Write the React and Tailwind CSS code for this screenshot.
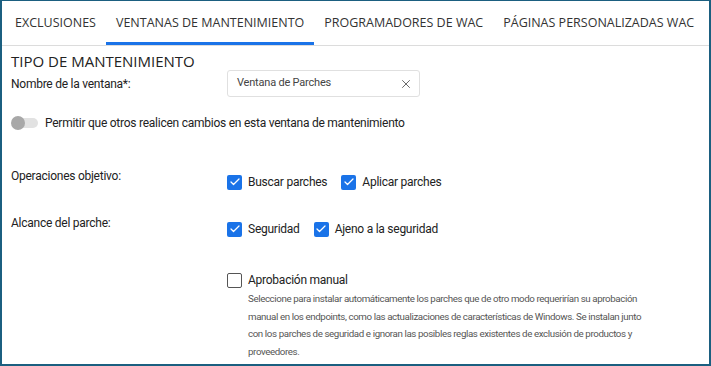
import { X, Check } from 'lucide-react';

const TABS = ['Exclusiones', 'Ventanas de mantenimiento', 'Programadores de WAC', 'Páginas personalizadas WAC'];

function Checkbox({ checked, label }) {
  return (
    <label className="flex items-center gap-[6px] h-[16px]">
      {checked ? (
        <span className="w-[15px] h-[15px] rounded-[2px] bg-[#1a73e8] flex items-center justify-center">
          <Check size={12} strokeWidth={2.5} className="text-white" />
        </span>
      ) : (
        <span className="w-[15px] h-[15px] rounded-[2px] border-[1.5px] border-[#555] bg-white" />
      )}
      <span className="text-[12px] leading-[16px] tracking-[-0.25px] text-[#222]">{label}</span>
    </label>
  );
}

export default function App() {
  const body = { fontFamily: 'Roboto, "Noto Sans", sans-serif' };
  return (
    <div className="w-[711px] h-[366px] bg-white border-x-2 border-t border-b-2 border-[#1b5f80] overflow-hidden" style={body}>
      {/* Tabs */}
      <div className="flex h-[45px] border-b border-[#dcdcdc] pl-[3px]" style={{ fontFamily: '"Open Sans", sans-serif' }}>
        {TABS.map((t, i) => (
          <div
            key={t}
            className={`px-[10px] flex items-center whitespace-nowrap uppercase text-[12.5px] text-[#333] ${i === 1 ? 'border-b-[3px] border-[#1a73e8] pt-[3px]' : ''}`}
          >
            {t}
          </div>
        ))}
      </div>

      <div className="pl-[9px]">
        <h2 className="text-[15px] text-[#222] uppercase mt-[6px] leading-[18px]" style={{ fontFamily: '"Open Sans", sans-serif' }}>
          Tipo de mantenimiento
        </h2>

        <div className="flex items-center">
          <div className="w-[216px] text-[12px] tracking-[-0.25px] text-[#222]">Nombre de la ventana*:</div>
          <div className="w-[193px] h-[27px] border border-[#e0e0e0] rounded-[3px] flex items-center justify-between pl-[9px] pr-[6px]">
            <span className="text-[11px] text-[#444] tracking-[-0.2px]">Ventana de Parches</span>
            <X size={14} strokeWidth={1.5} className="text-[#555]" />
          </div>
        </div>

        <div className="flex items-center mt-[18px] gap-[7px] h-[16px]">
          <div className="relative w-[27px] h-[14px]">
            <div className="absolute left-[3px] right-0 top-[2px] h-[10px] rounded-full bg-[#e2e2e2]" />
            <div className="absolute left-0 top-0 w-[14px] h-[14px] rounded-full bg-[#a8a8a8]" />
          </div>
          <span className="text-[12px] leading-[16px] tracking-[-0.25px] text-[#222]">Permitir que otros realicen cambios en esta ventana de mantenimiento</span>
        </div>

        <div className="flex mt-[37px]">
          <div className="w-[216px] text-[12px] leading-[16px] tracking-[-0.25px] text-[#222]">Operaciones objetivo:</div>
          <div className="flex gap-[14px] mt-[6px]">
            <Checkbox checked label="Buscar parches" />
            <Checkbox checked label="Aplicar parches" />
          </div>
        </div>

        <div className="flex mt-[25px]">
          <div className="w-[216px] text-[12px] leading-[16px] tracking-[-0.25px] text-[#222]">Alcance del parche:</div>
          <div className="flex gap-[14px] mt-[6px]">
            <Checkbox checked label="Seguridad" />
            <Checkbox checked label="Ajeno a la seguridad" />
          </div>
        </div>

        <div className="ml-[216px] mt-[35px]">
          <Checkbox label="Aprobación manual" />
          <p className="ml-[21px] mt-[2px] whitespace-nowrap text-[9.75px] tracking-[-0.4px] leading-[17.5px] text-[#555]">
            Seleccione para instalar automáticamente los parches que de otro modo requerirían su aprobación
            <br />
            manual en los endpoints, como las actualizaciones de características de Windows. Se instalan junto
            <br />
            con los parches de seguridad e ignoran las posibles reglas existentes de exclusión de productos y
            <br />
            proveedores.
          </p>
        </div>
      </div>
    </div>
  );
}
